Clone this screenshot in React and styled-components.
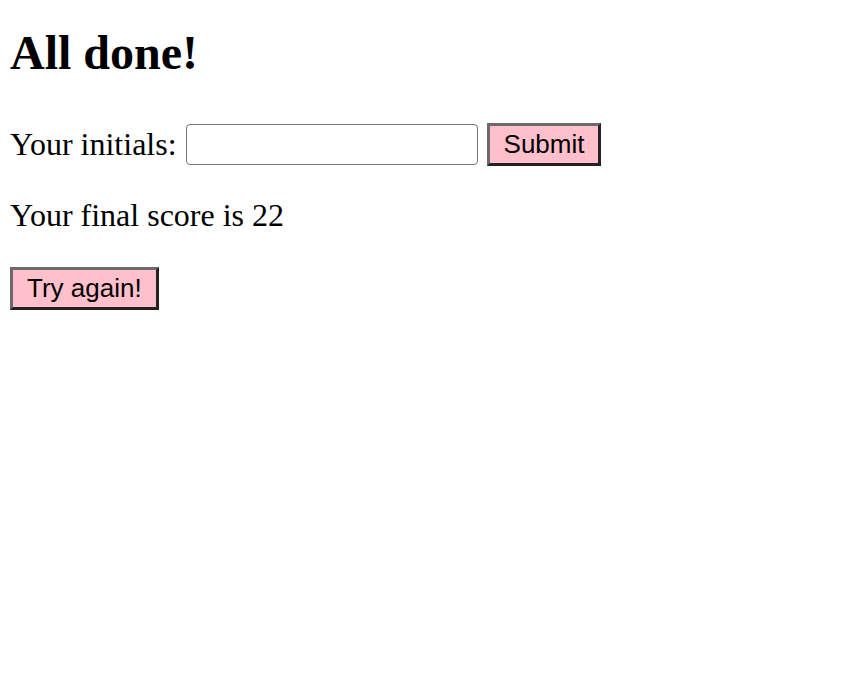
import React, { useState } from 'react';
import styled, { createGlobalStyle } from 'styled-components';

const GlobalStyle = createGlobalStyle`
  body {
    margin: 0;
    background: #fff;
    color: #000;
    font-family: 'Liberation Serif', 'Times New Roman', serif;
  }
`;

const Page = styled.main`
  padding: 0 10px;
`;

const Title = styled.h1`
  margin: 0;
  padding-top: 26px;
  font-size: 48px;
  font-weight: bold;
  line-height: 54px;
`;

const Form = styled.form`
  display: flex;
  align-items: center;
  margin-top: 43px;
  font-size: 32px;
`;

const Label = styled.label`
  margin-right: 9px;
`;

const Input = styled.input`
  box-sizing: border-box;
  width: 292px;
  height: 41px;
  border: 1px solid #767676;
  border-radius: 4px;
  padding: 0 6px;
  font-size: 24px;
  margin-right: 9px;
`;

const Button = styled.button`
  box-sizing: border-box;
  height: 43px;
  padding: 0 14px;
  background: pink;
  border: 3px solid;
  border-color: #6b6b6b #222 #222 #6b6b6b;
  font-family: 'Liberation Sans', Arial, sans-serif;
  font-size: 26px;
  color: #000;
  cursor: pointer;
`;

const Score = styled.p`
  margin: 31px 0 0;
  font-size: 32px;
  line-height: 36px;
`;

const Again = styled(Button)`
  margin-top: 34px;
`;

export default function App() {
  const [initials, setInitials] = useState('');
  return (
    <Page>
      <GlobalStyle />
      <Title>All done!</Title>
      <Form onSubmit={(e) => e.preventDefault()}>
        <Label htmlFor="initials">Your initials:</Label>
        <Input
          id="initials"
          value={initials}
          onChange={(e) => setInitials(e.target.value)}
        />
        <Button type="submit">Submit</Button>
      </Form>
      <Score>Your final score is 22</Score>
      <Again type="button">Try again!</Again>
    </Page>
  );
}
